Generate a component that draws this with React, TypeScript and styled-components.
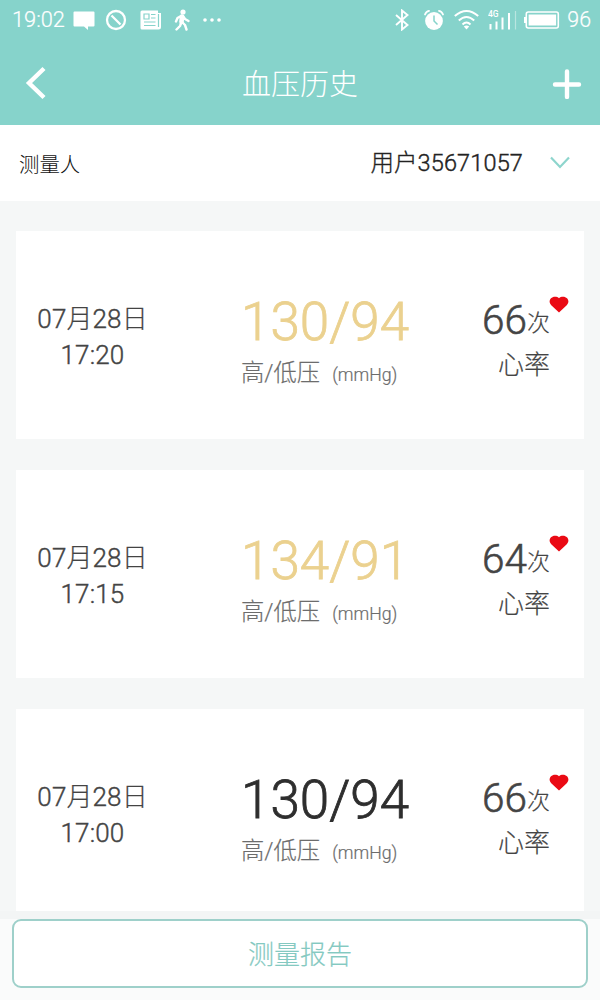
import React from 'react';
import styled, { createGlobalStyle } from 'styled-components';

const Global = createGlobalStyle`
  * { box-sizing: border-box; }
  body {
    margin: 0;
    background: #f5f7f7;
    font-family: Roboto, "Noto Sans CJK SC", sans-serif;
    font-weight: 300;
  }
`;

const Screen = styled.div`
  width: 600px;
  height: 1000px;
  overflow: hidden;
  display: flex;
  flex-direction: column;
  background: #f5f7f7;
`;

const Header = styled.header`
  flex: none;
  height: 125px;
  background: #86d3cb;
  color: #fff;
`;

const StatusBar = styled.div`
  display: flex;
  align-items: center;
  justify-content: space-between;
  height: 40px;
  padding: 0 9px 0 12px;
`;

const StatusGroup = styled.div`
  display: flex;
  align-items: center;
  height: 40px;
`;

const StatusText = styled.span<{ $size: number }>`
  font-size: ${p => p.$size}px;
  line-height: 40px;
  -webkit-text-stroke: 0.2px currentColor;
`;

const Glyph = styled.svg<{ $gap?: number }>`
  display: block;
  flex: none;
  margin-left: ${p => p.$gap ?? 0}px;
`;

const TitleBar = styled.div`
  display: grid;
  grid-template-columns: 80px 1fr 80px;
  align-items: center;
  height: 85px;
`;

const Title = styled.h1`
  margin: 0;
  padding-top: 5px;
  font-size: 29px;
  font-weight: 300;
  line-height: 80px;
  text-align: center;
`;

const Digits = styled.span`
  letter-spacing: 0.15px;
  -webkit-text-stroke: 0.4px currentColor;
`;

const PersonRow = styled.div`
  flex: none;
  display: flex;
  align-items: center;
  height: 76px;
  padding: 0 30px 0 19px;
  background: #fff;
  color: #222;
`;

const PersonLabel = styled.span`
  flex: 1;
  font-size: 20.4px;
  color: #111;
`;

const PersonName = styled.span`
  font-size: 23.5px;
  line-height: 36px;
  -webkit-text-stroke: 0.3px currentColor;
`;

const List = styled.main`
  flex: 1;
  min-height: 0;
  overflow: hidden;
  padding: 30px 16px 0;
  display: flex;
  flex-direction: column;
  gap: 31px;
`;

const Card = styled.article`
  flex: none;
  display: flex;
  height: 208px;
  background: #fff;
  color: #444;
  -webkit-text-stroke: 0.2px currentColor;
`;

const DateColumn = styled.div`
  width: 153px;
  padding-top: 70px;
  text-align: center;
  font-size: 26px;
  line-height: 36px;
`;

const PressureColumn = styled.div`
  flex: 1;
  padding: 60px 0 0 72px;
`;

const Pressure = styled.div<{ $high: boolean }>`
  font-size: 53px;
  line-height: 62px;
  -webkit-text-stroke: 0.8px currentColor;
  color: ${p => (p.$high ? '#ebd18f' : '#2e2e2e')};
`;

const Caption = styled.div`
  display: flex;
  align-items: baseline;
  gap: 12px;
  padding-top: 2px;
  font-size: 23.3px;
  line-height: 36px;
  color: #6c6c6c;
`;

const Unit = styled.span`
  font-size: 17.7px;
`;

const RateColumn = styled.div`
  position: relative;
  width: 140px;
  padding: 66px 34px 0 0;
  text-align: right;
`;

const Rate = styled.div`
  font-size: 40px;
  line-height: 46px;
`;

const RateValue = styled.span`
  font-size: 40.5px;
  -webkit-text-stroke: 0.6px currentColor;
`;

const RateUnit = styled.span`
  font-size: 23px;
  line-height: 1;
  vertical-align: 3px;
`;

const RateLabel = styled.div`
  font-size: 26px;
  line-height: 42px;
`;

const Heart = styled.svg`
  position: absolute;
  top: 65px;
  right: 15px;
`;

const Footer = styled.footer`
  flex: none;
  height: 89px;
  padding: 0 12px;
  border-top: 8px solid #f3f5f5;
  background: #fafbfb;
`;

const ReportButton = styled.button`
  display: block;
  width: 576px;
  height: 69px;
  padding: 0 0 2px;
  border: 2px solid #9ed0ca;
  border-radius: 9px;
  background: #fff;
  color: #84c9c1;
  font: inherit;
  font-size: 26px;
  -webkit-text-stroke: 0.2px currentColor;
`;

const records = [
  { month: '07', day: '28', time: '17:20', pressure: '130/94', rate: 66, high: true },
  { month: '07', day: '28', time: '17:15', pressure: '134/91', rate: 64, high: true },
  { month: '07', day: '28', time: '17:00', pressure: '130/94', rate: 66, high: false },
];

function LeftStatus() {
  return (
    <StatusGroup>
      <StatusText $size={21.8}>19:02</StatusText>
      <Glyph $gap={8} width="22" height="20" viewBox="0 0 22 20" fill="#fff">
        <path d="M1.500 1.500H20.500Q21.500 1.500 21.500 2.500V15.500Q21.500 16.500 20.500 16.500H15V20L11 16.500H1.500Q.5 16.500.5 15.500V2.500Q.5 1.500 1.500 1.500Z" />
      </Glyph>
      <Glyph $gap={10} width="22" height="22" viewBox="0 0 22 22" fill="none" stroke="#fff" strokeWidth="2.300">
        <circle cx="11" cy="11" r="9" />
        <path d="M6.500 6.500 15.500 15.500" />
      </Glyph>
      <Glyph $gap={13} width="22" height="20" viewBox="0 0 22 20">
        <path d="M2 .5H18V3H21V17Q21 19.500 18.500 19.500H2Q.5 19.500.5 18V2Q.5.5 2 .5Z" fill="#fff" />
        <path d="M4 4H9V9H4ZM11 4.500H15.500M11 8H15.500M4 12H15.500M4 15.500H15.500M18.500 4V17" fill="none" stroke="#86d3cb" strokeWidth="1.200" />
      </Glyph>
      <Glyph $gap={11} width="18" height="22" viewBox="0 0 18 22" fill="none" stroke="#fff" strokeLinecap="round" strokeLinejoin="round">
        <circle cx="10" cy="3" r="2.600" fill="#fff" stroke="none" />
        <path d="M9 7.500 8.500 13" strokeWidth="4.600" />
        <path d="M8 7 4.500 9 3 12.500M10 7 12 10 15.500 12M8.500 13 7 17 3.500 20.500M9 13 12 16 13.500 20.500" strokeWidth="2.400" />
      </Glyph>
      <Glyph $gap={11} width="20" height="6" viewBox="0 0 20 6" fill="#fff">
        <circle cx="3" cy="3" r="1.800" />
        <circle cx="10" cy="3" r="1.800" />
        <circle cx="17" cy="3" r="1.800" />
      </Glyph>
    </StatusGroup>
  );
}

function RightStatus() {
  return (
    <StatusGroup>
      <Glyph width="14" height="22" viewBox="0 0 14 22" fill="none" stroke="#fff" strokeWidth="1.900">
        <path d="M1 6 12.500 16 7 20.500V1.500L12.500 6 1 16" />
      </Glyph>
      <Glyph $gap={15} width="20" height="22" viewBox="0 0 20 22">
        <circle cx="10" cy="12" r="8.900" fill="#fff" />
        <path d="M1 5.500Q2 2.500 5 1.800M19 5.500Q18 2.500 15 1.800" fill="none" stroke="#fff" strokeWidth="1.800" strokeLinecap="round" />
        <path d="M10 6.500V12L13.500 15.500" fill="none" stroke="#86d3cb" strokeWidth="1.500" />
      </Glyph>
      <Glyph $gap={10} width="25" height="22" viewBox="0 0 25 22" fill="none" stroke="#fff" strokeWidth="2">
        <path d="M.8 7Q12.500-3 24.200 7M4.800 11.500Q12.500 4.500 20.200 11.500M8.500 15.500Q12.500 11.500 16.500 15.500" />
        <path d="M9.800 17.500Q12.500 15.500 15.200 17.500L12.500 20.500Z" fill="#fff" stroke="none" />
      </Glyph>
      <Glyph $gap={9} width="30" height="22" viewBox="0 0 30 22">
        <text x="0" y="7.500" fontSize="8.500" fontWeight="500" fill="#fff">4G</text>
        <path d="M2.500 15V20.500M8.500 12.500V20.500M14.500 8.500V20.500M21 4V20.500" stroke="#fff" strokeWidth="2" />
        <path d="M27.500 2V20.500" stroke="#b9e5e0" strokeWidth="1.200" />
      </Glyph>
      <Glyph $gap={6} width="36" height="18" viewBox="0 0 36 18">
        <rect x="2.300" y="1" width="32" height="16" rx="2" fill="none" stroke="#fff" strokeWidth="1.600" />
        <rect x="4.600" y="3.500" width="27.500" height="11" fill="#fff" />
        <path d="M0 6H2V12H0Z" fill="#fff" />
      </Glyph>
      <Glyph width="7" height="1" />
      <StatusText $size={21.4}>96</StatusText>
    </StatusGroup>
  );
}

export default function App() {
  return (
    <Screen>
      <Global />
      <Header>
        <StatusBar>
          <LeftStatus />
          <RightStatus />
        </StatusBar>
        <TitleBar>
          <Glyph $gap={25} width="24" height="34" viewBox="0 0 24 34" fill="none" stroke="#fff" strokeWidth="4.400">
            <path d="M19 2.500 4 17 19 31.500" />
          </Glyph>
          <Title>血压历史</Title>
          <Glyph $gap={32} width="30" height="32" viewBox="0 0 30 32" stroke="#fff" strokeWidth="4.400" strokeLinecap="round">
            <path d="M3 17.500H27M15 4.500V30" />
          </Glyph>
        </TitleBar>
      </Header>
      <PersonRow>
        <PersonLabel>测量人</PersonLabel>
        <PersonName>
          用户<Digits>35671057</Digits>
        </PersonName>
        <Glyph $gap={27} width="20" height="14" viewBox="0 0 20 14" fill="none" stroke="#8ed5cd" strokeWidth="2.200">
          <path d="M1 1.500 10 11 19 1.500" />
        </Glyph>
      </PersonRow>
      <List>
        {records.map(r => (
          <Card key={r.time}>
            <DateColumn>
              <div>
                <Digits>{r.month}</Digits>月<Digits>{r.day}</Digits>日
              </div>
              <Digits>{r.time}</Digits>
            </DateColumn>
            <PressureColumn>
              <Pressure $high={r.high}>{r.pressure}</Pressure>
              <Caption>
                高/低压<Unit>(mmHg)</Unit>
              </Caption>
            </PressureColumn>
            <RateColumn>
              <Rate>
                <RateValue>{r.rate}</RateValue>
                <RateUnit>次</RateUnit>
              </Rate>
              <RateLabel>心率</RateLabel>
              <Heart width="20" height="17" viewBox="0 0 20 17" fill="#ea0a14">
                <path d="M10 2.200C12 .2 16.200.2 18 2.300C20.300 5 19.500 7.500 17.500 9.500L10 16.500 2.500 9.500C.5 7.500-.3 5 2 2.300C3.800.2 8 .2 10 2.200Z" />
              </Heart>
            </RateColumn>
          </Card>
        ))}
      </List>
      <Footer>
        <ReportButton>测量报告</ReportButton>
      </Footer>
    </Screen>
  );
}
